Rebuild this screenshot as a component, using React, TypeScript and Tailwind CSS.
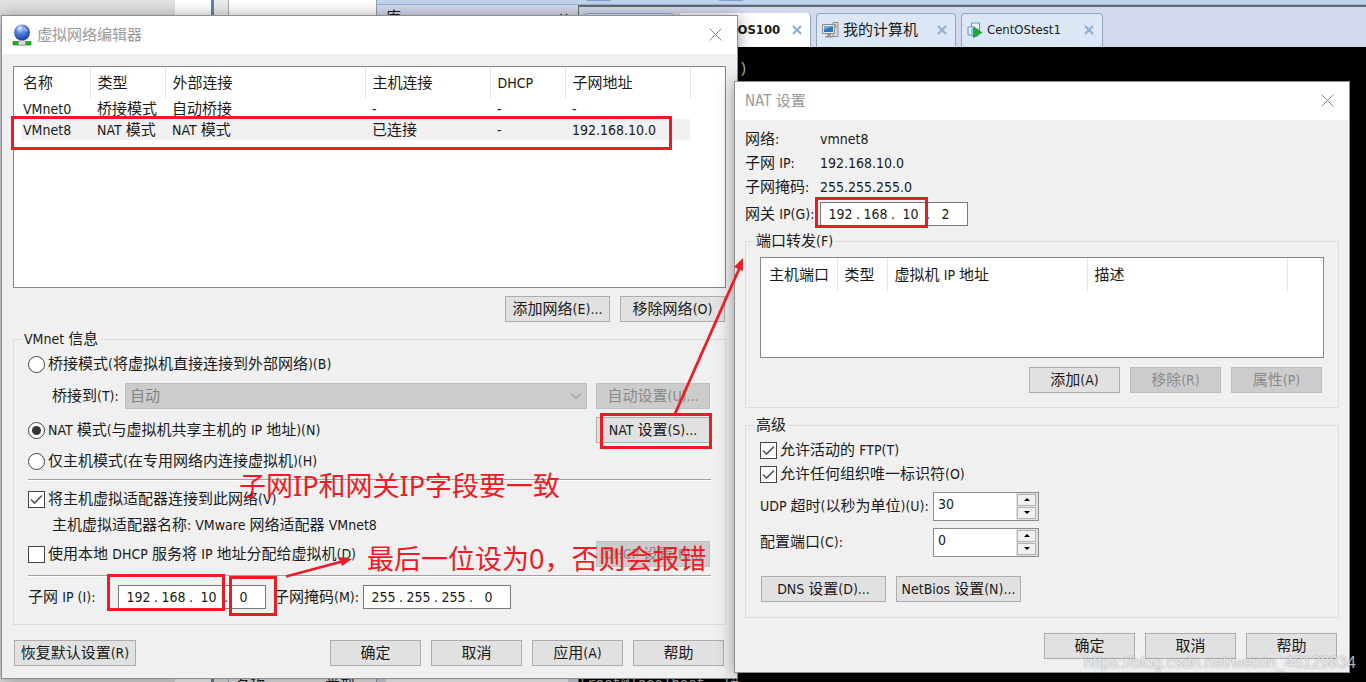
import { useState, type ReactNode } from "react";
import clsx from "clsx";

// Latin runs are set one pixel smaller than the Chinese text around them
function Txt({ children }: { children: string }) {
  return (
    <>
      {children.split(/([!-~][ -~]*)/).map((part, i) =>
        i % 2 ? (
          <span key={i} className="text-[14px]">
            {part}
          </span>
        ) : (
          part
        )
      )}
    </>
  );
}

function Btn({ children, className, disabled }: { children: string; className?: string; disabled?: boolean }) {
  return (
    <button
      type="button"
      disabled={disabled}
      className={clsx(
        "h-[26px] shrink-0 border text-center leading-5 whitespace-nowrap",
        disabled ? "border-[#bfbfbf] bg-[#cccccc] text-[#8a8a8a]" : "border-[#adadad] bg-[#e1e1e1]",
        className ?? "w-[91px]"
      )}
    >
      <Txt>{children}</Txt>
    </button>
  );
}

function Window({ title, icon, className, children }: { title: string; icon?: ReactNode; className: string; children: ReactNode }) {
  return (
    <section className={clsx("absolute border border-[#8f8f8f] bg-[#f0f0f0] shadow-[0_2px_16px_rgba(0,0,0,0.4)]", className)}>
      <header className="flex h-[38px] items-center gap-[5px] bg-white pr-[15px] pb-px pl-[10px] text-[#999999]">
        {icon}
        <h2 className="flex-1 leading-5">{title}</h2>
        <button type="button" aria-label="关闭">
          <svg viewBox="0 0 13 13" className="size-[13px]" stroke="#8a8a8a" fill="none">
            <path d="M.5 .5l12 12M12.5 .5l-12 12" />
          </svg>
        </button>
      </header>
      {children}
    </section>
  );
}

function Group({ title, className, children }: { title: string; className?: string; children: ReactNode }) {
  return (
    <fieldset className={clsx("border border-[#dcdcdc] px-[14px]", className)}>
      <legend className="-ml-[6px] h-5 px-[2px] leading-5">
        <Txt>{title}</Txt>
      </legend>
      {children}
    </fieldset>
  );
}

function Radio({ label, className, checked, onChange }: { label: string; className: string; checked: boolean; onChange: () => void }) {
  return (
    <label className={clsx("flex items-center gap-[3px]", className)}>
      <span className="grid size-[17px] place-items-center">
        <input
          type="radio"
          name="mode"
          checked={checked}
          onChange={onChange}
          className="peer col-start-1 row-start-1 size-[17px] appearance-none rounded-full border border-[#444444] bg-white"
        />
        <span className="pointer-events-none col-start-1 row-start-1 hidden size-[9px] rounded-full bg-[#333333] peer-checked:block" />
      </span>
      <span>
        <Txt>{label}</Txt>
      </span>
    </label>
  );
}

function Check({ label, className, defaultChecked }: { label: string; className: string; defaultChecked?: boolean }) {
  return (
    <label className={clsx("flex items-center gap-[3px]", className)}>
      <span className="grid size-[17px] place-items-center">
        <input
          type="checkbox"
          defaultChecked={defaultChecked}
          className="peer col-start-1 row-start-1 size-[17px] appearance-none border border-[#444444] bg-white"
        />
        <svg
          viewBox="0 0 13 13"
          className="pointer-events-none col-start-1 row-start-1 hidden size-[13px] peer-checked:block"
          fill="none"
          stroke="#555555"
          strokeWidth="1.6"
        >
          <path d="M1 6.5l3.5 3.5L12 2.5" />
        </svg>
      </span>
      <span>
        <Txt>{label}</Txt>
      </span>
    </label>
  );
}

function IpField({ id, value }: { id: string; value: string }) {
  return (
    <div className="flex h-6 w-[148px] items-center border border-[#7a7a7a] bg-white pl-[5px] text-[14px]">
      {value.split(".").map((octet, i) => (
        <span key={i} className="flex">
          {i > 0 && <span className="w-[6px] text-center leading-5">.</span>}
          <input
            id={i === 0 ? id : undefined}
            aria-label={i === 0 ? undefined : `${id}-${i + 1}`}
            defaultValue={octet}
            className="h-5 w-[29px] text-center leading-5 outline-none"
          />
        </span>
      ))}
    </div>
  );
}

function Spin({ id, value }: { id: string; value: string }) {
  return (
    <div className="flex h-[29px] w-[106px] items-stretch border border-[#8c8c8c] bg-white">
      <input id={id} defaultValue={value} className="min-w-0 flex-1 pb-1 pl-1 text-[14px] outline-none" />
      <div className="flex w-[22px] flex-col gap-px bg-[#dfdfe3] py-px pr-[2px] pl-px">
        <button type="button" aria-label="增加" className="grid flex-1 place-items-center border border-[#b4b4b4] bg-[#f0f0f0]">
          <svg viewBox="0 0 8 4" className="h-[3px] w-[6px]">
            <path d="M0 4L4 0l4 4z" />
          </svg>
        </button>
        <button type="button" aria-label="减少" className="grid flex-1 place-items-center border border-[#b4b4b4] bg-[#f0f0f0]">
          <svg viewBox="0 0 8 4" className="h-[3px] w-[6px]">
            <path d="M0 0l4 4 4-4z" />
          </svg>
        </button>
      </div>
    </div>
  );
}

function GlobeIcon() {
  return (
    <svg viewBox="0 0 20 22" className="h-[22px] w-5">
      <defs>
        <radialGradient id="globe" cx="0.4" cy="0.25" r="0.75">
          <stop offset="0" stopColor="#cfe0fb" />
          <stop offset="0.4" stopColor="#5b86dc" />
          <stop offset="1" stopColor="#1c3cae" />
        </radialGradient>
      </defs>
      <path d="M1 17.500h18v3.500H1z" fill="#12b512" stroke="#0a7d0a" strokeWidth=".6" />
      <path d="M8.5 14h3v3h2v4h-7v-4h2z" fill="#dcdcdc" stroke="#8d8d8d" strokeWidth=".6" />
      <circle cx="10" cy="8.500" r="8" fill="url(#globe)" />
      <path d="M5 4q3-3 5-2l-1 3-3 2zM12 3q3 1 4 4l-2 1-2-2z" fill="#fff" opacity=".3" />
    </svg>
  );
}

function ComputerIcon() {
  return (
    <svg viewBox="0 0 17 17" className="size-[17px]">
      <path d="M11 .5h5v14h-5z" fill="#d8d8d8" stroke="#8b8b8b" />
      <path d="M12.5 3h2M12.5 5h2" stroke="#777" />
      <path d="M.5 2.5h12v9H.5z" fill="#e6e6e6" stroke="#8b8b8b" />
      <path d="M2 4h9v6H2z" fill="#2e76b8" />
      <path d="M2 4h9L2 8z" fill="#6aa9dc" />
      <path d="M5 12h4v2H5zM3 14h8v1.5H3z" fill="#9a9a9a" />
    </svg>
  );
}

function RunningVmIcon() {
  return (
    <svg viewBox="0 0 16 16" className="size-4">
      <g fill="#e8f4fd" stroke="#4a9bd8">
        <path d="M4.500 1h8v8h-8z" />
        <path d="M1 5h7v8H1z" />
        <path d="M5 7h6v7H5z" />
      </g>
      <path d="M6.500 5.500l8.500 5-8.500 5z" fill="#1fae2c" stroke="#12811c" strokeWidth=".6" />
    </svg>
  );
}

function TabClose() {
  return (
    <button type="button" aria-label="关闭标签" className="ml-auto">
      <svg viewBox="0 0 10 10" className="size-[10px]" stroke="#8cb0d2" strokeWidth="2.2">
        <path d="M1 1l8 8M9 1l-8 8" />
      </svg>
    </button>
  );
}

// Whatever is still visible of the applications behind the two dialogs
function Backdrop() {
  return (
    <div className="flex h-full w-full">
      <div className="flex w-[376px] shrink-0 bg-white">
        <div className="w-[175px] bg-[#e2e2e2]" />
        <div className="w-9" />
        <div className="w-[3px] bg-[#5f86ac]" />
        <div className="w-[14px] bg-[#e9ebed]" />
        <div className="flex flex-1 flex-col justify-end border-l border-[#a5acb5]">
          <div className="flex h-[6px] gap-[60px] overflow-hidden bg-[#f0f0f0] pl-[6px] leading-5">
            <span>名称</span>
            <span>类型</span>
          </div>
        </div>
      </div>
      <div className="flex min-w-0 flex-1 flex-col border-l border-[#8f9fb8] bg-[#d4daed]">
        <div className="flex h-[5px] shrink-0 gap-[108px] border-b border-[#8fb7e0] bg-[#c1d5ec] pl-[210px]">
          <span className="h-px w-6 bg-[#7fa2d3]" />
          <span className="h-px w-6 bg-[#7fa2d3]" />
        </div>
        <div className="flex min-h-0 flex-1">
          <div className="flex w-[201px] flex-col">
            <div className="flex h-[18px] justify-between px-[9px] pt-[2px]">
              <span className="leading-5">库</span>
              <span className="text-[14px] leading-5">×</span>
            </div>
            <div className="mr-[10px] ml-[9px] flex-1 bg-white" />
          </div>
          <div className="flex min-w-0 flex-1 flex-col border-t-2 border-l border-[#6a6a6a]">
            <nav className="flex h-10 shrink-0 items-end gap-[5px] pl-[5px]">
              <div className="h-[34px] w-[90px] rounded-t border border-b-0 border-[#8fb0d0] bg-[#dce7f5]" />
              <a
                href="#centos100"
                className="flex h-[34px] w-[132px] items-center rounded-t border-r border-[#8fa6bd] bg-white pr-2 pl-7 text-[13px] font-bold"
              >
                CentOS100
                <TabClose />
              </a>
              <a
                href="#computer"
                className="flex h-[34px] w-[140px] items-center gap-1 rounded-t border border-b-0 border-[#8fa6bd] bg-[#dce7f5] pr-2 pb-px pl-[5px]"
              >
                <ComputerIcon />
                我的计算机
                <TabClose />
              </a>
              <a
                href="#test1"
                className="flex h-[34px] w-[142px] items-center gap-1 rounded-t border border-b-0 border-[#8fa6bd] bg-[#dce7f5] pr-2 pb-px pl-[5px] text-[13px]"
              >
                <RunningVmIcon />
                CentOStest1
                <TabClose />
              </a>
            </nav>
            <pre className="flex flex-1 flex-col justify-between overflow-hidden bg-black font-['Liberation_Mono',monospace] text-[14px] leading-5 text-[#c0c0c0]">
              <span className="pt-3 pl-[160px]">)</span>
              <span className="-mb-3">[root@localhost ~]#</span>
            </pre>
          </div>
        </div>
      </div>
    </div>
  );
}

const networks = [
  ["VMnet0", "桥接模式", "自动桥接", "-", "-", "-"],
  ["VMnet8", "NAT 模式", "NAT 模式", "已连接", "-", "192.168.10.0"],
];

function NetworkTable() {
  return (
    <div className="h-[222px] border border-[#828790] bg-white pl-[7px]">
      <table className="w-[669px] table-fixed border-collapse text-left">
        <colgroup>
          <col className="w-[69px]" />
          <col className="w-[75px]" />
          <col className="w-[200px]" />
          <col className="w-[125px]" />
          <col className="w-[75px]" />
          <col className="w-[125px]" />
        </colgroup>
        <thead>
          <tr className="h-[31px]">
            {["名称", "类型", "外部连接", "主机连接", "DHCP", "子网地址"].map((head) => (
              <th key={head} className="border-r border-[#e5e5e5] pt-[2px] pl-[7px] font-normal first:pl-[2px]">
                <Txt>{head}</Txt>
              </th>
            ))}
          </tr>
        </thead>
        <tbody>
          {networks.map((row) => (
            <tr key={row[0]} className="h-[21px] leading-5 last:bg-[#f0f0f0]">
              {row.map((cell, i) => (
                <td key={i} className="pl-[7px] first:pl-[2px]">
                  <Txt>{cell}</Txt>
                </td>
              ))}
            </tr>
          ))}
        </tbody>
      </table>
    </div>
  );
}

function NetworkEditor() {
  const [mode, setMode] = useState("nat");

  return (
    <Window title="虚拟网络编辑器" icon={<GlobeIcon />} className="top-[15px] left-px w-[737px]">
      <div className="px-[11px] pt-3 pb-[12px]">
        <NetworkTable />
        <div className="mt-2 flex justify-end gap-[10px] pr-px">
          <Btn className="w-[105px]">添加网络(E)...</Btn>
          <Btn className="w-[105px]">移除网络(O)</Btn>
        </div>

        <Group title="VMnet 信息" className="mt-[7px] pb-[10px]">
          <Radio label="桥接模式(将虚拟机直接连接到外部网络)(B)" className="h-[30px]" checked={mode === "bridge"} onChange={() => setMode("bridge")} />
          <div className="flex h-[34px] items-center pr-px pl-6">
            <label htmlFor="bridge-to" className="w-[73px]">
              <Txt>桥接到(T):</Txt>
            </label>
            <div className="relative mr-[9px] flex-1">
              <select id="bridge-to" disabled className="block h-[26px] w-full appearance-none border border-[#bfbfbf] bg-[#cccccc] pl-1 text-[#838383] opacity-100">
                <option>自动</option>
              </select>
              <svg viewBox="0 0 10 6" className="absolute top-[10px] right-[6px] h-[6px] w-[10px]" fill="none" stroke="#a0a0a0" strokeWidth="1.3">
                <path d="M0 .5l5 5 5-5" />
              </svg>
            </div>
            <Btn className="w-[114px]" disabled>
              自动设置(U)...
            </Btn>
          </div>
          <div className="flex h-[34px] items-center justify-between pr-px">
            <Radio label="NAT 模式(与虚拟机共享主机的 IP 地址)(N)" className="h-[30px]" checked={mode === "nat"} onChange={() => setMode("nat")} />
            <Btn className="w-[114px]">NAT 设置(S)...</Btn>
          </div>
          <Radio label="仅主机模式(在专用网络内连接虚拟机)(H)" className="h-7" checked={mode === "host"} onChange={() => setMode("host")} />
          <hr className="mt-1 mb-[3px] h-[2px] border-t border-b border-t-[#a0a0a0] border-b-white" />
          <Check label="将主机虚拟适配器连接到此网络(V)" className="h-[30px]" defaultChecked />
          <p className="pl-6 leading-[22px]">
            <Txt>主机虚拟适配器名称: VMware 网络适配器 VMnet8</Txt>
          </p>
          <div className="flex h-9 items-center justify-between pr-px">
            <Check label="使用本地 DHCP 服务将 IP 地址分配给虚拟机(D)" className="h-[30px]" />
            <Btn className="w-[114px]" disabled>
              DHCP 设置(P)...
            </Btn>
          </div>
          <hr className="my-[3px] h-[2px] border-t border-b border-t-[#a0a0a0] border-b-white" />
          <div className="flex h-[34px] items-center">
            <label htmlFor="subnet-ip" className="w-[90px]">
              <Txt>子网 IP (I):</Txt>
            </label>
            <IpField id="subnet-ip" value="192.168.10.0" />
            <label htmlFor="subnet-mask" className="w-[97px] pl-2">
              <Txt>子网掩码(M):</Txt>
            </label>
            <IpField id="subnet-mask" value="255.255.255.0" />
          </div>
        </Group>

        <div className="mt-[15px] flex justify-end gap-[10px] pr-[2px] pl-px">
          <Btn className="mr-auto w-[122px]">恢复默认设置(R)</Btn>
          <Btn>确定</Btn>
          <Btn>取消</Btn>
          <Btn>应用(A)</Btn>
          <Btn>帮助</Btn>
        </div>
      </div>
    </Window>
  );
}

function NatSettings() {
  return (
    <Window title="NAT 设置" className="top-[81px] left-[734px] w-[616px]">
      <div className="px-[10px] pt-[7px] pb-[13px]">
        <dl className="grid grid-cols-[75px_1fr] leading-6">
          <dt>
            <Txt>网络:</Txt>
          </dt>
          <dd className="text-[14px]">vmnet8</dd>
          <dt>
            <Txt>子网 IP:</Txt>
          </dt>
          <dd className="text-[14px]">192.168.10.0</dd>
          <dt>
            <Txt>子网掩码:</Txt>
          </dt>
          <dd className="text-[14px]">255.255.255.0</dd>
        </dl>
        <div className="flex h-[30px] items-center">
          <label htmlFor="gateway" className="w-[75px] whitespace-nowrap">
            <Txt>网关 IP(G):</Txt>
          </label>
          <IpField id="gateway" value="192.168.10.2" />
        </div>

        <Group title="端口转发(F)" className="mt-[2px] pb-[14px]">
          <div className="mt-[6px] h-[101px] border border-[#828790] bg-white">
            <table className="w-[526px] table-fixed border-collapse text-left">
              <colgroup>
                <col className="w-[76px]" />
                <col className="w-[50px]" />
                <col className="w-[200px]" />
                <col className="w-[200px]" />
              </colgroup>
              <thead>
                <tr className="h-[33px]">
                  {["主机端口", "类型", "虚拟机 IP 地址", "描述"].map((head) => (
                    <th key={head} className="border-r border-[#e5e5e5] pt-[2px] pl-[7px] font-normal whitespace-nowrap first:pl-2">
                      <Txt>{head}</Txt>
                    </th>
                  ))}
                </tr>
              </thead>
            </table>
          </div>
          <div className="mt-[9px] flex justify-end gap-[10px] pr-[2px]">
            <Btn>添加(A)</Btn>
            <Btn disabled>移除(R)</Btn>
            <Btn disabled>属性(P)</Btn>
          </div>
        </Group>

        <Group title="高级" className="mt-[7px] pb-[14px]">
          <Check label="允许活动的 FTP(T)" className="mt-[3px] h-6" defaultChecked />
          <Check label="允许任何组织唯一标识符(O)" className="h-6" defaultChecked />
          <div className="mt-[2px] flex h-9 items-center">
            <label htmlFor="udp" className="w-[173px] whitespace-nowrap">
              <Txt>UDP 超时(以秒为单位)(U):</Txt>
            </label>
            <Spin id="udp" value="30" />
          </div>
          <div className="flex h-9 items-center">
            <label htmlFor="port" className="w-[173px]">
              <Txt>配置端口(C):</Txt>
            </label>
            <Spin id="port" value="0" />
          </div>
          <div className="mt-4 mb-px flex gap-[10px] pl-px">
            <Btn className="w-[125px]">DNS 设置(D)...</Btn>
            <Btn className="w-[125px]">NetBios 设置(N)...</Btn>
          </div>
        </Group>

        <div className="mt-[15px] flex justify-end gap-[10px] pr-[2px]">
          <Btn>确定</Btn>
          <Btn>取消</Btn>
          <Btn>帮助</Btn>
        </div>
      </div>
    </Window>
  );
}

// Red marker boxes, arrows and notes drawn on top of the desktop
function Annotations() {
  return (
    <div className="pointer-events-none absolute inset-0 font-['Noto_Sans','Noto_Sans_CJK_SC',sans-serif] text-[27px] leading-9 whitespace-nowrap text-[#ed1c24]">
      <div className="absolute top-[116px] left-[11px] h-[34px] w-[661px] border-3 border-[#ed1c24]" />
      <div className="absolute top-[413px] left-[600px] h-9 w-28 border-3 border-[#ed1c24]" />
      <div className="absolute top-[574px] left-[107px] h-[37px] w-[118px] border-3 border-[#ed1c24]" />
      <div className="absolute top-[576px] left-[229px] h-10 w-12 border-3 border-[#ed1c24]" />
      <div className="absolute top-[197px] left-[815px] h-[31px] w-[113px] border-3 border-[#ed1c24]" />
      <svg className="absolute inset-0 size-full" stroke="#ed1c24" fill="#ed1c24">
        <path d="M674 416L740 267" strokeWidth="2.8" fill="none" />
        <path d="M743 258l-9 9 9 4z" stroke="none" />
        <path d="M286 576.500L344 561" strokeWidth="2.8" fill="none" />
        <path d="M352 559l-13-2 3 9z" stroke="none" />
      </svg>
      <p className="absolute top-[468px] left-[239px]">子网IP和网关IP字段要一致</p>
      <p className="absolute top-[541px] left-[367px]">最后一位设为0，否则会报错</p>
    </div>
  );
}

export default function App() {
  return (
    <main className="relative h-screen w-full overflow-hidden bg-black font-['DejaVu_Sans_Condensed','Noto_Sans_CJK_SC',sans-serif] text-[15px] text-[#1a1a1a]">
      <Backdrop />
      <NetworkEditor />
      <NatSettings />
      <Annotations />
      <p className="pointer-events-none absolute right-[10px] bottom-[7px] font-['Liberation_Sans',sans-serif] text-[16px] leading-6 text-white/70 [text-shadow:0_0_2px_rgba(0,0,0,0.4)]">
        https://blog.csdn.net/weixin_46129834
      </p>
    </main>
  );
}
